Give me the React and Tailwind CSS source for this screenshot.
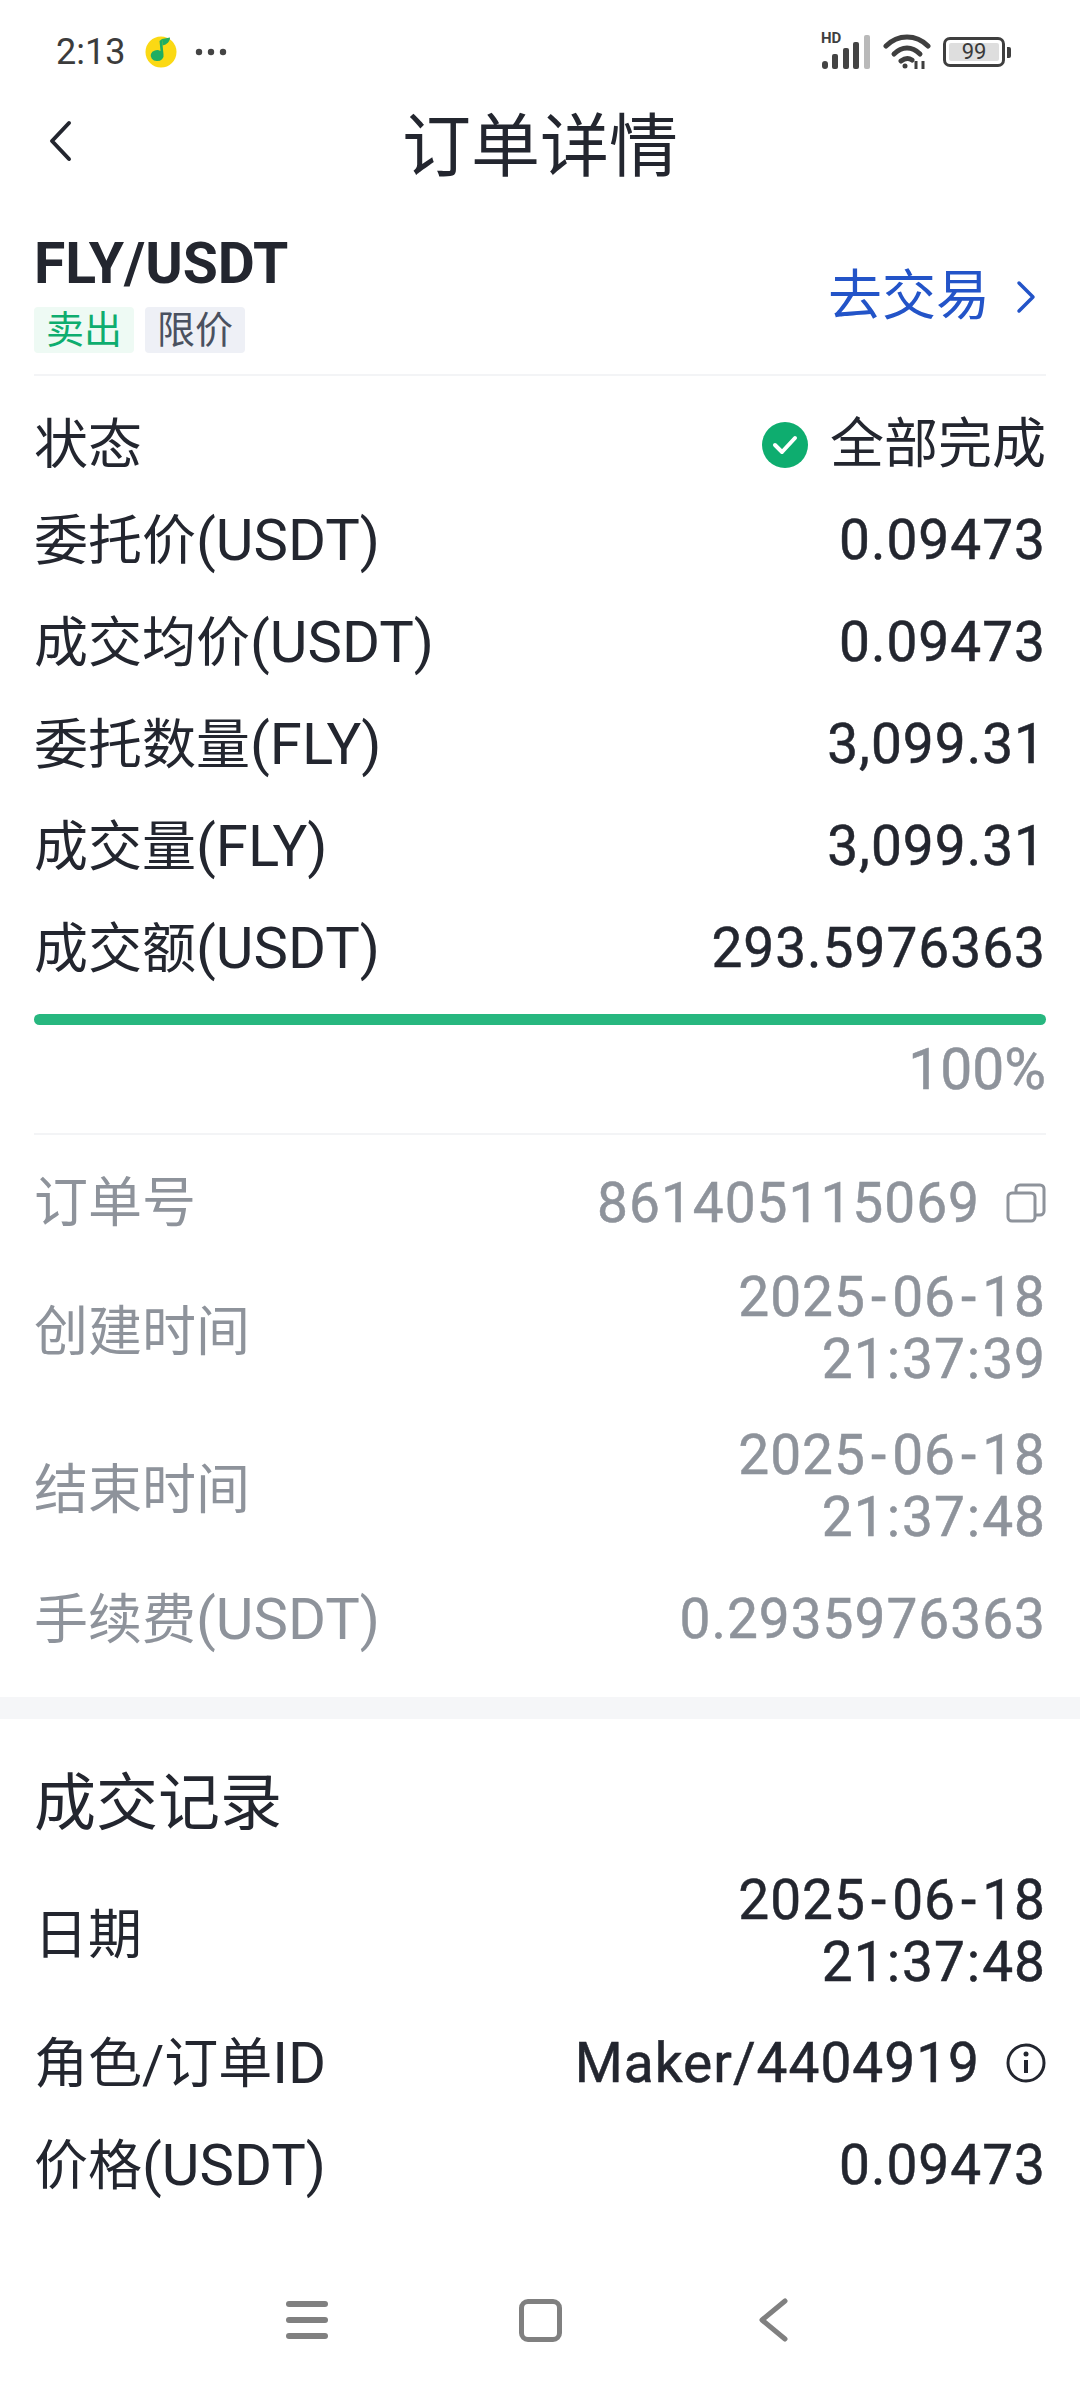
import React from 'react';

const FONT = 'font-["Roboto","Noto_Sans_CJK_SC",sans-serif]';

function Row({ label, unit, value, className = 'h-[102px]', labelClass = '', muted = false, children }) {
  const color = muted ? 'text-[#8e939b]' : 'text-[#23262f]';
  return (
    <div className={`flex items-center justify-between ${className} ${color}`}>
      <span className={`text-[54px] leading-none ${labelClass}`}>
        {label}
        {unit && <span className="text-[58px]">{unit}</span>}
      </span>
      <span className="flex items-center text-[55px] leading-[62px] text-right tracking-[1px] [-webkit-text-stroke:0.5px]">
        {value}
        {children}
      </span>
    </div>
  );
}

// date on one line, time below; the separators sit wider than the font's own
function Stamp({ date, time }) {
  const [y, m, d] = date.split('-');
  const [h, min, s] = time.split(':');
  const dash = <span className="mx-[5px]">-</span>;
  const colon = <span className="mx-[1px]">:</span>;
  return (
    <span className="block">
      <span className="block">{y}{dash}{m}{dash}{d}</span>
      <span className="block">{h}{colon}{min}{colon}{s}</span>
    </span>
  );
}

function StatusBar() {
  return (
    <div className="flex h-[104px] items-center justify-between pl-[56px] pr-[69px]">
      <div className="flex items-center">
        <span className="text-[36px] leading-none text-[#3c3c3c]">2:13</span>
        <svg className="ml-[20px]" width="32" height="32" viewBox="0 0 32 32">
          <circle cx="16" cy="16" r="15.5" fill="#fbd914" />
          <path d="M17 3l1.5 15.5a6.5 5.500 0 1 1-3-3.6L14.5 5z" fill="#1fae62" />
          <path d="M17 3l8-1.5c0 4-3 7-7.500 8z" fill="#1fae62" />
        </svg>
        <svg className="ml-[18px]" width="32" height="8" viewBox="0 0 32 8" fill="#444">
          <circle cx="4" cy="4" r="3.200" />
          <circle cx="16" cy="4" r="3.200" />
          <circle cx="28" cy="4" r="3.200" />
        </svg>
      </div>
      <div className="flex items-center gap-[12px]">
        <div className="relative h-[36px] w-[50px]">
          <span className="absolute left-0 top-[-3px] text-[15px] font-bold leading-none text-[#3f3f3f]">HD</span>
          <svg className="absolute inset-0" width="50" height="36" viewBox="0 0 50 36">
            <rect x="1" y="27" width="6" height="8" rx="3" fill="#444" />
            <rect x="11" y="20" width="6" height="15" rx="2" fill="#444" />
            <rect x="22" y="14" width="6" height="21" rx="2" fill="#444" />
            <rect x="32" y="8" width="6" height="27" rx="2" fill="#444" />
            <rect x="43" y="1" width="6" height="34" rx="2" fill="#b9b9b9" />
          </svg>
        </div>
        <svg width="48" height="38" viewBox="0 0 48 38" fill="none" stroke="#3f3f3f" strokeWidth="5" strokeLinecap="round">
          <path d="M3 13C15 1 33 1 45 13" />
          <path d="M11 21c8-8 18-8 26 0" />
          <path d="M18 28c4-3 8-3 11-1" />
          <circle cx="22" cy="33" r="2.500" fill="#3f3f3f" stroke="none" />
          <path d="M33 28v8M40 28v8" strokeWidth="3" strokeLinecap="butt" />
        </svg>
        <div className="flex items-center">
          <div className="flex h-[30px] w-[62px] items-center rounded-[7px] border-[3px] border-[#3f3f3f] p-[3px]">
            <span className="flex h-full w-full items-center justify-center rounded-[2px] bg-[#dedede] text-[22px] leading-none text-[#3a3a3a]">99</span>
          </div>
          <span className="ml-[2px] h-[11px] w-[4px] rounded-r-[2px] bg-[#3f3f3f]" />
        </div>
      </div>
    </div>
  );
}

export default function App() {
  return (
    <div className={`h-[2400px] w-[1080px] overflow-hidden bg-white ${FONT}`}>
      <StatusBar />

      {/* Title bar */}
      <div className="relative flex h-[84px] items-center justify-center">
        <svg className="absolute left-[48px] top-[16px]" width="24" height="42" viewBox="0 0 24 42" fill="none" stroke="#23262f" strokeWidth="4" strokeLinecap="round" strokeLinejoin="round">
          <path d="M21 3L4 21l17 18" />
        </svg>
        <h1 className="mt-[2px] text-[69px] font-normal leading-none text-[#23262f]">订单详情</h1>
      </div>

      <div className="px-[34px]">
        {/* Pair */}
        <div className="flex h-[188px] items-end justify-between border-b-2 border-[#f3f4f6] pb-[21px]">
          <div>
            <div className="text-[57px] font-bold leading-none text-[#23262f]">FLY/USDT</div>
            <div className="mt-[15px] flex gap-[11px]">
              <span className="flex h-[46px] w-[100px] items-center justify-center rounded-[4px] bg-[#eefaf4] text-[38px] leading-none text-[#0ead6f]">卖出</span>
              <span className="flex h-[46px] w-[100px] items-center justify-center rounded-[4px] bg-[#eef0f6] text-[38px] leading-none text-[#4a5160]">限价</span>
            </div>
          </div>
          <div className="mb-[29px] mr-[10px] flex items-center text-[#2354c8]">
            <span className="text-[54px] leading-none">去交易</span>
            <svg className="ml-[26px]" width="20" height="34" viewBox="0 0 20 34" fill="none" stroke="currentColor" strokeWidth="3.500" strokeLinecap="round" strokeLinejoin="round">
              <path d="M3 3l14 14L3 31" />
            </svg>
          </div>
        </div>

        {/* Order */}
        <div className="mt-[24px] flex h-[89px] items-center justify-between text-[#23262f]">
          <span className="mt-[3px] text-[54px] leading-none">状态</span>
          <span className="flex items-center text-[54px] leading-none">
            <svg className="mr-[22px]" width="46" height="46" viewBox="0 0 46 46">
              <circle cx="23" cy="23" r="23" fill="#0ead6f" />
              <path d="M13 23l7 7 13-14" fill="none" stroke="#fff" strokeWidth="4" strokeLinecap="round" strokeLinejoin="round" />
            </svg>
            全部完成
          </span>
        </div>
        <Row label="委托价" unit="(USDT)" value="0.09473" />
        <Row label="成交均价" unit="(USDT)" value="0.09473" />
        <Row label="委托数量" unit="(FLY)" value="3,099.31" />
        <Row label="成交量" unit="(FLY)" value="3,099.31" />
        <Row label="成交额" unit="(USDT)" value="293.5976363" />

        <div className="mt-[15px] h-[11px] rounded-full bg-[#27b77f]" />
        <div className="mt-[14px] flex h-[60px] items-center justify-end text-[57px] leading-none text-[#8e939b] [-webkit-text-stroke:0.5px]">100%</div>
        <div className="mt-[34px] h-[2px] bg-[#f3f4f6]" />

        <Row label="订单号" value="861405115069" muted labelClass="mt-[2px]" className="mt-[17px] h-[102px]">
          <svg className="ml-[26px]" width="40" height="40" viewBox="0 0 40 40" fill="none" stroke="#8e939b" strokeWidth="3">
            <rect x="2" y="10" width="27" height="28" rx="4" />
            <path d="M10 10V6a4 4 0 0 1 4-4h20a4 4 0 0 1 4 4v22a4 4 0 0 1-4 4h-5" />
          </svg>
        </Row>
        <Row label="创建时间" value={<Stamp date="2025-06-18" time="21:37:39" />} muted labelClass="mt-[9px]" className="mt-[12px] h-[124px]" />
        <Row label="结束时间" value={<Stamp date="2025-06-18" time="21:37:48" />} muted labelClass="mt-[9px]" className="mt-[34px] h-[124px]" />
        <Row label="手续费" unit="(USDT)" value="0.2935976363" muted className="mt-[20px] h-[102px]" />
      </div>

      <div className="mt-[27px] h-[22px] bg-[#f5f6f8]" />

      <div className="px-[34px]">
        <h2 className="mt-[35px] flex h-[100px] items-center text-[62px] font-normal leading-none text-[#23262f]">成交记录</h2>
        <Row label="日期" value={<Stamp date="2025-06-18" time="21:37:48" />} labelClass="mt-[9px]" className="mt-[15px] h-[124px]" />
        <Row label="角色/订单" unit="ID" value="Maker/4404919" className="mt-[19px] h-[102px]">
          <svg className="ml-[26px]" width="40" height="40" viewBox="0 0 40 40" fill="none" stroke="#23262f" strokeWidth="3">
            <circle cx="20" cy="20" r="18" />
            <path d="M20 17v13" strokeWidth="4" />
            <circle cx="20" cy="11" r="2.500" fill="#23262f" stroke="none" />
          </svg>
        </Row>
        <Row label="价格" unit="(USDT)" value="0.09473" />
      </div>

      {/* Nav bar */}
      <div className="mt-[74px] flex h-[60px] items-center justify-center">
        <div className="flex w-[233px] justify-center">
          <svg width="42" height="38" viewBox="0 0 42 38" fill="#808080">
            <rect x="0" y="0" width="42" height="6" rx="3" />
            <rect x="0" y="16" width="42" height="6" rx="3" />
            <rect x="0" y="32" width="42" height="6" rx="3" />
          </svg>
        </div>
        <div className="flex w-[233px] justify-center">
          <div className="h-[43px] w-[43px] rounded-[9px] border-[5px] border-[#808080]" />
        </div>
        <div className="flex w-[233px] justify-center">
          <svg width="30" height="44" viewBox="0 0 30 44" fill="none" stroke="#808080" strokeWidth="5" strokeLinecap="round" strokeLinejoin="round">
            <path d="M27 3L4 22l23 19" />
          </svg>
        </div>
      </div>
    </div>
  );
}
